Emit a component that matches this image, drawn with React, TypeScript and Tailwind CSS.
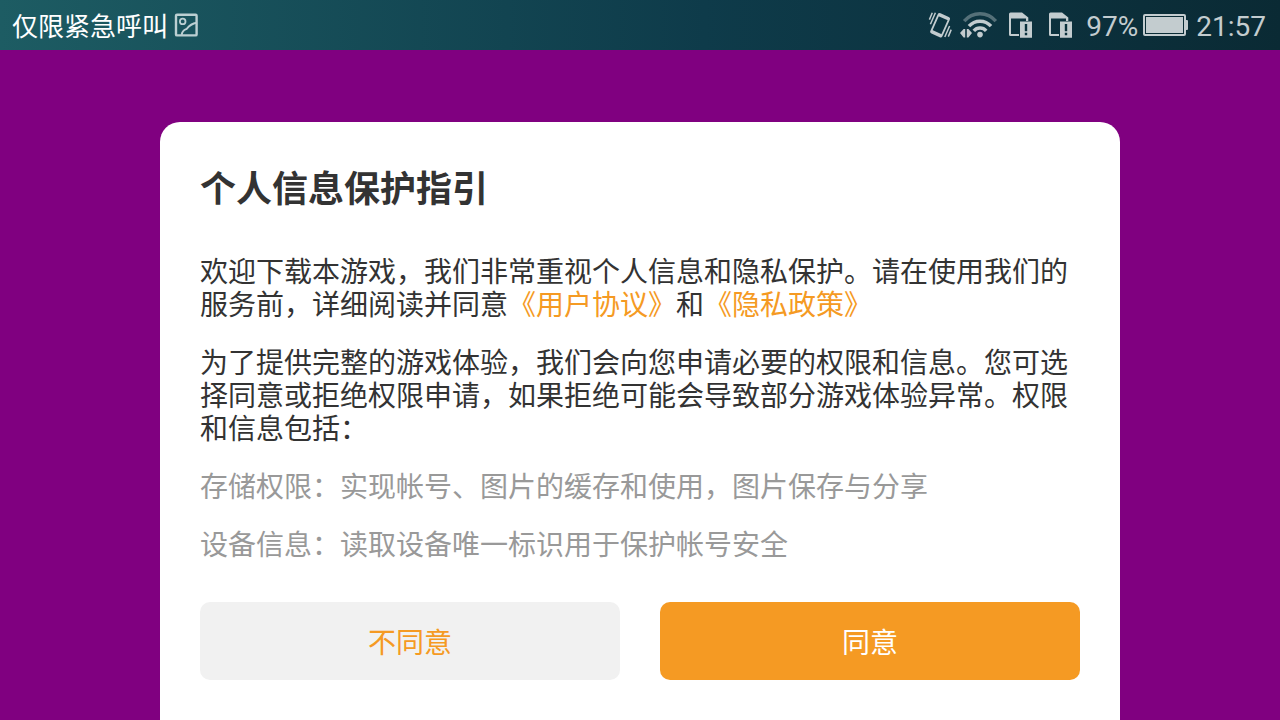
import { ReactNode } from "react"

const permissions = [
  "存储权限：实现帐号、图片的缓存和使用，图片保存与分享",
  "设备信息：读取设备唯一标识用于保护帐号安全",
]

function ScreenshotIcon() {
  return (
    <svg width="24" height="24" viewBox="0 0 24 24" fill="none" stroke="#bccfd2" strokeWidth="2.4" aria-hidden="true">
      <rect x="2" y="1.8" width="20.6" height="20.6" rx="1" />
      <circle cx="8.7" cy="8.4" r="2.8" strokeWidth="1.8" />
      <path d="M7.6 22C8.4 17 11 16.6 12.6 16C15 13 17.5 10.6 22.5 9.8" strokeWidth="2" />
    </svg>
  )
}

function VibrateIcon() {
  return (
    <svg width="24" height="26" viewBox="0 0 24 26" fill="none" stroke="currentColor" aria-hidden="true">
      <g transform="rotate(24 12 13.2)">
        <rect x="6.4" y="3" width="11.4" height="20.4" rx="1.2" strokeWidth="1.8" />
        <path d="M6.4 4.4h11.4M6.4 22h11.4" strokeWidth="2.4" />
      </g>
      <path d="M4.3 .8L1.4 7.6M7.4 .8L2.4 12.2M21.6 14L16.8 25M23.2 17.6L20.3 24.6" strokeWidth="1.5" />
    </svg>
  )
}

function WifiIcon() {
  return (
    <svg width="38" height="26" viewBox="0 0 38 26" fill="none" stroke="currentColor" strokeWidth="3.4" aria-hidden="true">
      <path d="M4.2 9.2a20.6 20.6 0 0 1 31.6 0" opacity=".4" />
      <path d="M9 14.2a14.6 14.6 0 0 1 22 0" />
      <path d="M13.8 18.8a8.2 8.2 0 0 1 12.4 0" />
      <circle cx="20" cy="22.6" r="2.8" fill="currentColor" stroke="none" />
      <path d="M0 21L3.6 17H5.2v8.4H3.6zM12 21L8.4 17H6.8v8.4h1.6z" fill="currentColor" stroke="none" />
    </svg>
  )
}

function SimAlertIcon() {
  return (
    <svg width="24" height="26" viewBox="0 0 24 26" fill="currentColor" aria-hidden="true">
      <path
        fillRule="evenodd"
        d="M2.5 .4H14L20.3 5.6V9H11V24H2.5Q1 24 1 22.5V2Q1 .4 2.5 .4zM3 6.6V22H11V9H18V6.6z"
      />
      <path fillRule="evenodd" d="M12 9.6h12v16.2H12zM16.8 12v7.2h2.4v-7.2zM16.8 20.8v2.4h2.4v-2.4z" />
    </svg>
  )
}

function BatteryIcon() {
  return (
    <svg width="45" height="22" viewBox="0 0 45 22" fill="currentColor" aria-hidden="true">
      <rect x="1" y="1" width="41" height="20" rx="1" fill="none" stroke="currentColor" strokeWidth="2" />
      <rect x="3" y="3" width="37" height="16" />
      <rect x="2.5" y="2.5" width="38" height="17" fill="none" stroke="#0b2c36" />
      <path d="M43 6h1q1 0 1 1v8q0 1-1 1h-1z" />
    </svg>
  )
}

function StatusBar() {
  return (
    <header className="flex h-[50px] items-center justify-between bg-linear-to-r from-[#1d5c63] via-[#0e3b4a] via-55% to-[#0a2a34] pr-3.5 pl-3 text-[#c3cccf]">
      <div className="flex items-center gap-1.5">
        <span className="text-[26px] leading-[48px] text-white">仅限紧急呼叫</span>
        <ScreenshotIcon />
      </div>
      <div className="flex items-center">
        <div className="flex items-center gap-2">
          <VibrateIcon />
          <WifiIcon />
        </div>
        <div className="ml-2.5 flex items-center gap-4">
          <SimAlertIcon />
          <SimAlertIcon />
        </div>
        <span className="mr-[5px] ml-3.5 pt-1 font-['Roboto',sans-serif] text-[28px] leading-[46px]">97%</span>
        <BatteryIcon />
        <time className="ml-2 pt-1 font-['Roboto',sans-serif] text-[28px] leading-[46px]">21:57</time>
      </div>
    </header>
  )
}

function PolicyLink({ href, children }: { href: string; children: ReactNode }) {
  return (
    <a href={href} className="text-[#f59a23]">
      {children}
    </a>
  )
}

export default function App() {
  return (
    <div lang="zh-CN" className="flex min-h-screen flex-col bg-[#800080] font-['Noto_Sans_CJK_SC',sans-serif]">
      <StatusBar />

      <main className="flex flex-1 flex-col px-[12.5%] pt-[72px]">
        <section
          role="dialog"
          aria-labelledby="guide-title"
          className="flex-1 rounded-t-[20px] bg-white p-10 text-[28px] leading-[33px] text-[#333]"
        >
          <h1 id="guide-title" className="mb-11 text-4xl leading-[48px] font-bold">
            个人信息保护指引
          </h1>

          <div className="flex flex-col gap-[25px]">
            <p>
              欢迎下载本游戏，我们非常重视个人信息和隐私保护。请在使用我们的服务前，详细阅读并同意
              <PolicyLink href="#agreement">《用户协议》</PolicyLink>和
              <PolicyLink href="#privacy">《隐私政策》</PolicyLink>
            </p>
            <p>
              为了提供完整的游戏体验，我们会向您申请必要的权限和信息。您可选择同意或拒绝权限申请，如果拒绝可能会导致部分游戏体验异常。权限和信息包括：
            </p>
            {permissions.map((item) => (
              <p key={item} className="text-[#999]">
                {item}
              </p>
            ))}
          </div>

          {/* Actions */}
          <div className="mt-[42px] grid grid-cols-2 gap-10">
            <button type="button" className="h-[78px] rounded-[10px] bg-[#f1f1f1] text-[#f59a23]">
              不同意
            </button>
            <button type="button" className="h-[78px] rounded-[10px] bg-[#f59a23] text-white">
              同意
            </button>
          </div>
        </section>
      </main>
    </div>
  )
}
